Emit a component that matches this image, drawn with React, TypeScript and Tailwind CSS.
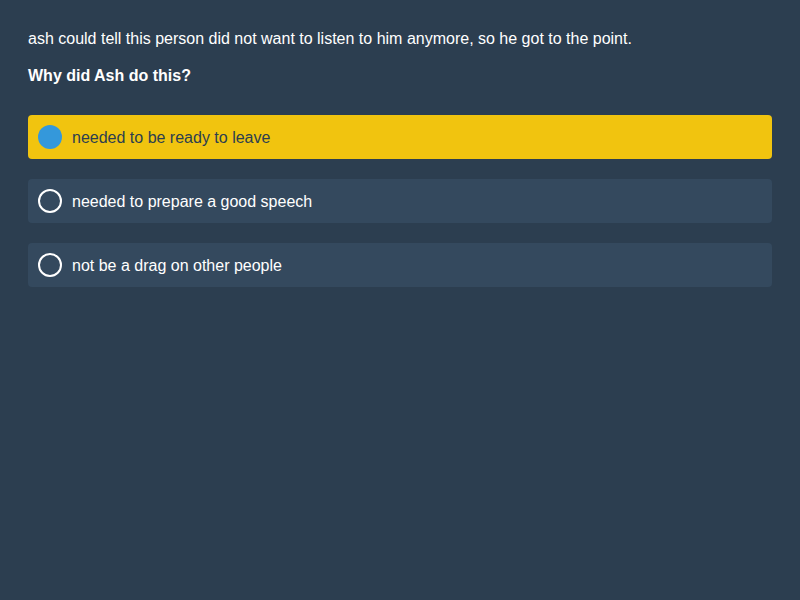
import React, { useState } from 'react';

const options = [
  'needed to be ready to leave',
  'needed to prepare a good speech',
  'not be a drag on other people',
];

export default function App() {
  const [selected, setSelected] = useState(0);

  return (
    <div className="min-h-[600px] w-full bg-[#2c3e50] px-[28px] pt-[29px] text-white font-['Liberation_Sans',Arial,sans-serif]">
      <p className="text-[16px] leading-[20px] mb-[17px]">
        ash could tell this person did not want to listen to him anymore, so he got to the point.
      </p>
      <p className="text-[16px] leading-[20px] font-bold mb-[29px]">Why did Ash do this?</p>

      <div className="flex flex-col gap-[20px]">
        {options.map((opt, i) => {
          const active = i === selected;
          return (
            <button
              key={opt}
              type="button"
              onClick={() => setSelected(i)}
              className={
                active
                  ? 'flex items-center gap-[10px] h-[44px] px-[10px] rounded-[4px] bg-[#f1c40f] text-[#2c3e50] text-left'
                  : 'flex items-center gap-[10px] h-[44px] px-[10px] rounded-[4px] bg-[#34495e] text-white text-left'
              }
            >
              {active ? (
                <span className="size-[24px] rounded-full bg-[#3498db] shrink-0"></span>
              ) : (
                <span className="size-[24px] rounded-full border-2 border-white shrink-0"></span>
              )}
              <span className="text-[16px] leading-[20px] pt-[2px]">{opt}</span>
            </button>
          );
        })}
      </div>
    </div>
  );
}
